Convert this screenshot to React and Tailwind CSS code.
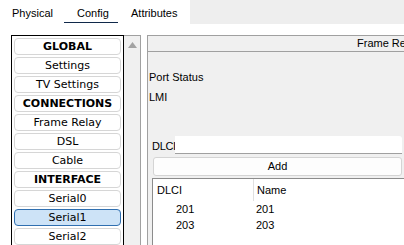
import React from "react"

const SIDE_ITEMS = [
  { label: "GLOBAL", bold: true },
  { label: "Settings" },
  { label: "TV Settings" },
  { label: "CONNECTIONS", bold: true },
  { label: "Frame Relay" },
  { label: "DSL" },
  { label: "Cable" },
  { label: "INTERFACE", bold: true },
  { label: "Serial0" },
  { label: "Serial1", selected: true },
  { label: "Serial2" },
]

const DLCI_ROWS = [
  { dlci: "201", name: "201" },
  { dlci: "203", name: "203" },
]

const ARIAL = "font-['Liberation_Sans',Arial,sans-serif]"

const App = () => {
  return (
    <div className={`w-[404px] h-[245px] overflow-hidden bg-white text-black ${ARIAL}`}>
      {/* Tabs */}
      <div className="flex h-[24px]">
        <div className="flex w-[190px] shrink-0 h-[24px] text-[11px]">
          <div className="w-[64px] h-[23px] pl-[12px] pt-[5px]">Physical</div>
          <div className="w-[54px] h-[23px] flex flex-col">
            <div className="flex-1 pt-[5px] pl-[13px]">Config</div>
            <div className="h-[4px] bg-[#10294a]" />
          </div>
          <div className="w-[72px] h-[23px] pl-[13px] pt-[5px]">Attributes</div>
        </div>
        <div className="flex-1 bg-[#eeeeee]" />
      </div>

      {/* Body */}
      <div className="flex pt-[11px] pl-[11px]">
        {/* Sidebar list */}
        <div className="w-[113px] h-[220px] shrink-0 border border-black pl-[2px] pt-[2px] flex flex-col gap-[2px] font-['DejaVu_Sans',Verdana,sans-serif] text-[11px]">
          {SIDE_ITEMS.map(item => (
            <div
              key={item.label}
              className={`w-[107px] h-[17px] shrink-0 rounded-[4px] border flex items-center justify-center leading-none ${
                item.selected ? "bg-[#cde3f7] border-[#2f6fb0]" : "bg-white border-[#d6d6d6]"
              } ${item.bold ? "font-bold" : ""}`}
            >
              {item.label}
            </div>
          ))}
        </div>

        {/* Scrollbar */}
        <div className="w-[17px] h-[220px] shrink-0 bg-[#f0f0f0] border-r border-t border-[#a0a0a0] flex justify-center pt-[6px]">
          <svg width="9" height="6" viewBox="0 0 9 6">
            <path d="M4.5 0 L9 6 L0 6 Z" fill="#a3a3a3" />
          </svg>
        </div>

        {/* Right panel */}
        <div className="ml-[6px] w-[320px] h-[220px] shrink-0 border-l border-t border-[#a0a0a0] bg-[#f0f0f0] text-[11px]">
          <div className="h-[16px] border-b border-[#a0a0a0] pl-[209px] leading-[15px] whitespace-nowrap">
            Frame Relay
          </div>
          <div className="pl-[1px] pt-[18px] leading-[14px]">Port Status</div>
          <div className="pl-[1px] pt-[6px] leading-[14px]">LMI</div>

          {/* DLCI input */}
          <div className="flex items-end ml-[4px] mt-[32px]">
            <div className="w-[23px] shrink-0 whitespace-nowrap leading-[14px] pb-[1px] tracking-[-0.3px]">DLCI</div>
            <div className="w-[227px] h-[18px] shrink-0 bg-white border-b border-[#a0a0a0] rounded-tr-[3px]" />
          </div>

          {/* Add button */}
          <div className="ml-[5px] mt-[3px] w-[249px] h-[19px] rounded-[3px] border border-[#d4d4d4] bg-[#fdfdfd] flex items-center justify-center">
            Add
          </div>

          {/* Table */}
          <div className="ml-[4px] mt-[2px] w-[300px] h-[80px] bg-white border-l border-t border-[#8c8c8c]">
            <div className="flex h-[22px] items-center">
              <div className="w-[101px] h-[22px] shrink-0 pl-[4px] flex items-center border-r border-[#e0e0e0]">DLCI</div>
              <div className="pl-[3px]">Name</div>
            </div>
            {DLCI_ROWS.map(row => (
              <div key={row.dlci} className="flex h-[16px] items-center">
                <div className="w-[101px] shrink-0 pl-[23px]">{row.dlci}</div>
                <div className="pl-[2px]">{row.name}</div>
              </div>
            ))}
          </div>
        </div>
      </div>
    </div>
  )
}

export default App
